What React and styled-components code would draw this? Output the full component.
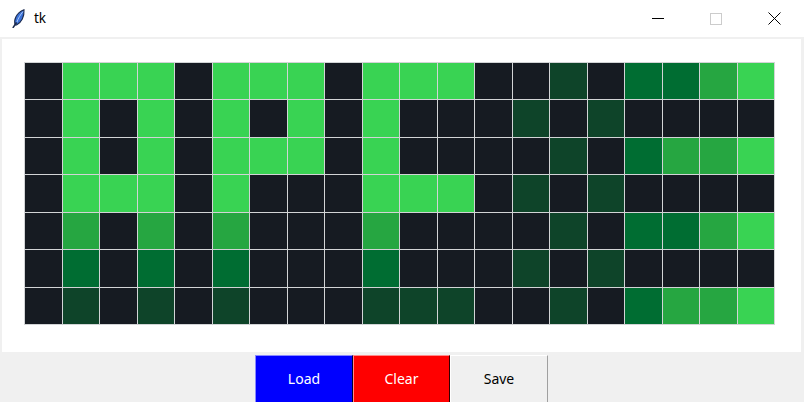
import React from 'react';
import styled, { createGlobalStyle } from 'styled-components';

const GlobalStyle = createGlobalStyle`
  body {
    margin: 0;
    background: #f0f0f0;
    overflow: hidden;
    font-family: "Noto Sans", "Open Sans", sans-serif;
  }
`;

const Window = styled.div`
  width: 804px;
  height: 402px;
  display: flex;
  flex-direction: column;
  background: #f0f0f0;
  overflow: hidden;
`;

const TitleBar = styled.header`
  height: 37px;
  flex: none;
  display: flex;
  align-items: center;
  background: #ffffff;
  padding-right: 1px;
`;

const AppIcon = styled.svg`
  width: 13px;
  height: 19px;
  margin: 0 9px 1px 12px;
`;

const Title = styled.span`
  font-size: 13.5px;
  color: #000;
  flex: 1;
  margin-bottom: 1px;
`;

const Control = styled.div`
  width: 58px;
  height: 37px;
  display: flex;
  align-items: center;
  justify-content: center;
`;

const Body = styled.main`
  flex: 1;
  display: flex;
  flex-direction: column;
  align-items: center;
  padding: 2px 3px 0 2px;
`;

const Canvas = styled.div`
  align-self: stretch;
  height: 313px;
  background: #ffffff;
  padding: 23px 0 0 22px;
  box-sizing: border-box;
`;

const Grid = styled.div`
  width: 751px;
  height: 263px;
  display: grid;
  grid-template-columns: repeat(20, 1fr);
  grid-template-rows: repeat(7, 1fr);
  gap: 1px;
  padding: 1px;
  box-sizing: border-box;
  background: #d2d4d6;
`;

const Cell = styled.div`
  background: ${p => p.$color};
`;

const ButtonRow = styled.div`
  display: flex;
  margin-top: 3px;
`;

const Button = styled.button`
  width: 97.5px;
  height: 48px;
  box-sizing: border-box;
  font-family: "Noto Sans", "Open Sans", sans-serif;
  font-size: 14px;
  padding: 0 0 2px;
  color: ${p => p.$fg};
  background: ${p => p.$bg};
  border-style: solid;
  border-width: 1px;
  border-color: ${p => p.$light} ${p => p.$dark} ${p => p.$dark} ${p => p.$light};
`;

const palette = ['#161b22', '#0e4429', '#006d32', '#26a641', '#39d353'];

const rows = [
  '04440444044400102234',
  '04040404040001010000',
  '04040444040000102334',
  '04440400044401010000',
  '03030300030000102234',
  '02020200020001010000',
  '01010100011100102334',
];

const buttons = [
  { label: 'Load', bg: '#0000ff', fg: '#ffffff', light: '#8a8aff', dark: '#000033' },
  { label: 'Clear', bg: '#ff0000', fg: '#ffffff', light: '#ff8a8a', dark: '#330000' },
  { label: 'Save', bg: '#f0f0f0', fg: '#000000', light: '#ffffff', dark: '#a0a0a0' },
];

const Feather = () => (
  <AppIcon viewBox="0 0 13 19">
    <path d="M3.2 16 C1.5 11 4 4 12 0.8 C12.5 7.5 9.5 13.5 4.5 16 Z" fill="#3b72d9" stroke="#1c2b4e" strokeWidth="1.1" />
    <path d="M4.8 13.5 C6 9.5 8.5 5.5 11 2.6" fill="none" stroke="#a9c6f5" strokeWidth="1" />
    <path d="M1.2 18.4 L4.2 14" stroke="#1c2b4e" strokeWidth="1.6" strokeLinecap="round" />
  </AppIcon>
);

const App = () => {
  return (
    <Window>
      <GlobalStyle />
      <TitleBar>
        <Feather />
        <Title>tk</Title>
        <Control>
          <svg width="12" height="12" viewBox="0 0 12 12"><path d="M0 5.5 H12" stroke="#000" strokeWidth="1" /></svg>
        </Control>
        <Control>
          <svg width="12" height="12" viewBox="0 0 12 12"><rect x="0.5" y="0.5" width="11" height="11" fill="none" stroke="#cccccc" strokeWidth="1" /></svg>
        </Control>
        <Control>
          <svg width="13" height="13" viewBox="0 0 13 13"><path d="M0.5 0.5 L12.5 12.5 M12.5 0.5 L0.5 12.5" stroke="#000" strokeWidth="1" /></svg>
        </Control>
      </TitleBar>
      <Body>
        <Canvas>
          <Grid>
            {rows.map((row, r) =>
              row.split('').map((v, c) => (
                <Cell key={`${r}-${c}`} $color={palette[Number(v)]} />
              ))
            )}
          </Grid>
        </Canvas>
        <ButtonRow>
          {buttons.map(b => (
            <Button key={b.label} $bg={b.bg} $fg={b.fg} $light={b.light} $dark={b.dark}>
              {b.label}
            </Button>
          ))}
        </ButtonRow>
      </Body>
    </Window>
  );
};

export default App;
